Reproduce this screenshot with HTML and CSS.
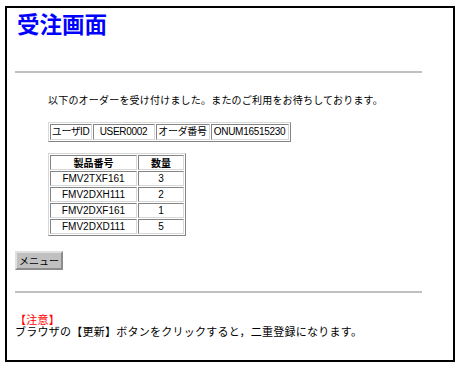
FILE: index.html
```html
<!DOCTYPE html>
<html lang="ja">
<head>
  <meta charset="UTF-8">
  <title>受注画面</title>
  <link rel="stylesheet" href="styles.css">
</head>
<body>
  <div class="frame">
    <h1 class="title">受注画面</h1>
    <hr class="rule">
    <div class="content">
      <p class="message">以下のオーダーを受け付けました。またのご利用をお待ちしております。</p>
      <table class="grid info">
        <tr>
          <td class="c-label1">ユーザID</td>
          <td class="c-user">USER0002</td>
          <td class="c-label2">オーダ番号</td>
          <td class="c-order">ONUM16515230</td>
        </tr>
      </table>
      <table class="grid items">
        <tr>
          <th class="c-product">製品番号</th>
          <th class="c-qty">数量</th>
        </tr>
        <tr><td>FMV2TXF161</td><td>3</td></tr>
        <tr><td>FMV2DXH111</td><td>2</td></tr>
        <tr><td>FMV2DXF161</td><td>1</td></tr>
        <tr><td>FMV2DXD111</td><td>5</td></tr>
      </table>
    </div>
    <button class="menu-btn" type="button">メニュー</button>
    <hr class="rule rule-bottom">
    <div class="notice">
      <div class="notice-head">【注意】</div>
      <div class="notice-text">ブラウザの【更新】ボタンをクリックすると，二重登録になります。</div>
    </div>
  </div>
</body>
</html>
```

FILE: styles.css
```css
body { margin: 0; background: #fff; font-family: "Liberation Sans", "Noto Sans CJK JP", sans-serif; font-size: 10px; color: #000; }
.frame { box-sizing: border-box; width: 450px; height: 356px; margin: 6px 0 0 5px; border: 2px solid #000; padding: 0 0 0 8px; }
.title { margin: 2px 0 0 2px; font-family: "Noto Sans CJK JP", sans-serif; font-size: 22.5px; line-height: 26px; font-weight: bold; color: #0000ff; }
.rule { width: 407px; height: 2px; margin: 35px 0 0 0; border: none; background: #c0c0c0; }
.content { padding-left: 33px; }
.message { margin: 20px 0 0 0; line-height: 14px; font-family: "Noto Sans CJK JP", sans-serif; letter-spacing: 0.2px; }
.grid { border: 1px outset #d8d8d8; border-spacing: 1px; text-align: center; }
.grid td, .grid th { box-sizing: border-box; height: 15px; padding: 0 1px; border: 1px inset #d8d8d8; line-height: 12px; white-space: nowrap; }
.grid th { font-family: "Noto Sans CJK JP", sans-serif; font-weight: bold; }
.info { margin-top: 15px; }
.info td { height: 16px; letter-spacing: -0.3px; }
.c-label1 { width: 38px; font-feature-settings: "palt"; }
.c-user { width: 62px; }
.c-label2 { width: 54px; }
.c-order { width: 78px; }
.items { margin-top: 11px; }
.c-product { width: 87px; }
.c-qty { width: 46px; }
.menu-btn { display: block; box-sizing: border-box; width: 48px; height: 19px; margin: 15px 0 0 0; padding: 0; background: #c0c0c0; border: 2px outset #e0e0e0; font-family: "Noto Sans CJK JP", sans-serif; font-size: 10px; color: #000; }
.rule-bottom { margin-top: 21px; }
.notice { margin-top: 20px; line-height: 12px; font-family: "Noto Sans CJK JP", sans-serif; font-size: 11px; letter-spacing: 0.25px; }
.notice-head { color: #ff0000; }
```
